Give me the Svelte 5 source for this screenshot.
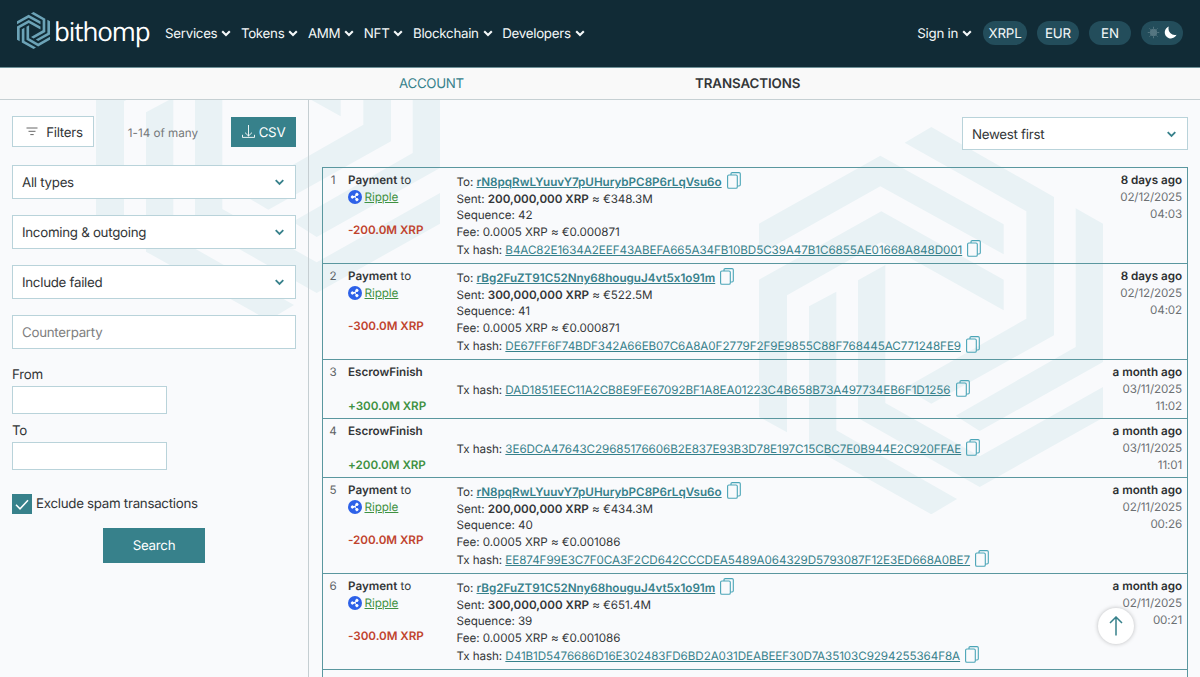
<script>
  const menu = ["Services", "Tokens", "AMM", "NFT", "Blockchain", "Developers"];
  const filters = ["All types", "Incoming & outgoing", "Include failed"];

  const first = "rN8pqRwLYuuvY7pUHurybPC8P6rLqVsu6o";
  const second = "rBg2FuZT91C52Nny68houguJ4vt5x1o91m";

  const transactions = [
    { type: "Payment", change: "-200.0M XRP", to: first, sent: "200,000,000 XRP", fiat: "€348.3M", sequence: 42, fee: "€0.000871", hash: "B4AC82E1634A2EEF43ABEFA665A34FB10BD5C39A47B1C6855AE01668A848D001", ago: "8 days ago", date: "02/12/2025", time: "04:03" },
    { type: "Payment", change: "-300.0M XRP", to: second, sent: "300,000,000 XRP", fiat: "€522.5M", sequence: 41, fee: "€0.000871", hash: "DE67FF6F74BDF342A66EB07C6A8A0F2779F2F9E9855C88F768445AC771248FE9", ago: "8 days ago", date: "02/12/2025", time: "04:02" },
    { type: "EscrowFinish", change: "+300.0M XRP", hash: "DAD1851EEC11A2CB8E9FE67092BF1A8EA01223C4B658B73A497734EB6F1D1256", ago: "a month ago", date: "03/11/2025", time: "11:02" },
    { type: "EscrowFinish", change: "+200.0M XRP", hash: "3E6DCA47643C29685176606B2E837E93B3D78E197C15CBC7E0B944E2C920FFAE", ago: "a month ago", date: "03/11/2025", time: "11:01" },
    { type: "Payment", change: "-200.0M XRP", to: first, sent: "200,000,000 XRP", fiat: "€434.3M", sequence: 40, fee: "€0.001086", hash: "EE874F99E3C7F0CA3F2CD642CCCDEA5489A064329D5793087F12E3ED668A0BE7", ago: "a month ago", date: "02/11/2025", time: "00:26" },
    { type: "Payment", change: "-300.0M XRP", to: second, sent: "300,000,000 XRP", fiat: "€651.4M", sequence: 39, fee: "€0.001086", hash: "D41B1D5476686D16E302483FD6BD2A031DEABEEF30D7A35103C9294255364F8A", ago: "a month ago", date: "02/11/2025", time: "00:21" }
  ];

  let spam = true;
</script>

{#snippet mark(name)}
  <svg class={name} viewBox="58 20 1032 1162" preserveAspectRatio="none">
    <path d="M58 310 422 106 792 312V402L422 198 58 402Z" />
    <path d="M58 478 425 273 792 478V570L425 365 142 525V936L58 890Z" />
    <path d="M208 558 290 514V930L652 1136 575 1182 208 976Z" />
    <path d="M355 480 437 434V848L720 1008 1090 800V892L720 1100 355 893Z" />
    <path d="M575 20 943 230V645L575 850 495 803 860 595V273L495 67Z" />
    <path d="M1008 264 1090 310V725L720 932 648 886 1008 680Z" />
  </svg>
{/snippet}

{#snippet chevron()}
  <svg class="chevron" viewBox="0 0 10 7"><path d="M1.2 1.2 5 5 8.8 1.2" /></svg>
{/snippet}

{#snippet copy()}
  <svg class="copy" viewBox="0 0 14 17">
    <path d="M4 3V1.8Q4 .6 5.2 .6H12Q13.3 .6 13.3 1.8V12.8Q13.3 14 12 14H10.5" />
    <rect x=".6" y="3" width="9.7" height="13.3" rx="1.3" />
  </svg>
{/snippet}

<div class="page">
  <header>
    <a class="logo" href="#home">
      {@render mark("logo-mark")}
      <span>bithomp</span>
    </a>
    <nav>
      {#each menu as item}
        <span class="menu-item">{item}{@render chevron()}</span>
      {/each}
    </nav>
    <div class="header-right">
      <span class="menu-item sign-in">Sign in{@render chevron()}</span>
      <span class="pill wide">XRPL</span>
      <span class="pill">EUR</span>
      <span class="pill">EN</span>
      <span class="pill theme">
        <svg class="sun" viewBox="0 0 14 14">
          <circle cx="7" cy="7" r="3.6" />
          <path d="M7 .8V3M7 11v2.2M.8 7H3M11 7h2.2M2.6 2.6 4 4M10 10l1.4 1.4M11.4 2.6 10 4M4 10l-1.4 1.4" />
        </svg>
        <svg class="moon" viewBox="0 0 14 14"><path d="M5.2 .6A6.6 6.6 0 1 0 13.5 9.4 6.9 6.9 0 0 1 5.2 .6Z" /></svg>
      </span>
    </div>
  </header>

  <div class="tabs">
    <a href="#account">ACCOUNT</a>
    <b>TRANSACTIONS</b>
  </div>

  <main>
    {@render mark("watermark left")}
    {@render mark("watermark right")}

    <aside>
      <div class="filters-top">
        <button class="filters">
          <svg viewBox="0 0 12 9"><path d="M.5 1h11M2.5 4.3h7M4.3 7.6h3.4" /></svg>
          Filters
        </button>
        <span class="count">1-14 of many</span>
        <button class="csv">
          <svg viewBox="0 0 13 13"><path d="M6.5 0V11M3 7.6 6.5 11 10 7.6M.5 9.8V12.4H12.5V9.8" /></svg>
          CSV
        </button>
      </div>
      {#each filters as filter}
        <div class="select">{filter}{@render chevron()}</div>
      {/each}
      <input class="counterparty" placeholder="Counterparty" />
      <label class="date">From<input /></label>
      <label class="date">To<input /></label>
      <button class="check" onclick={() => (spam = !spam)}>
        <span class="box">
          {#if spam}
            <svg viewBox="0 0 14 11"><path d="M1 5.8 5 9.8 13 1.2" /></svg>
          {/if}
        </span>
        Exclude spam transactions
      </button>
      <button class="search">Search</button>
    </aside>

    <section>
      <div class="select sort">Newest first{@render chevron()}</div>
      <div class="table">
        {#each transactions as tx, i}
          <div class="row" class:short={!tx.to}>
            <div class="index">{i + 1}</div>
            <div class="type">
              <div><b>{tx.type}</b>{tx.to ? " to" : ""}</div>
              {#if tx.to}
                <div class="name">
                  <svg viewBox="0 0 14 14">
                    <circle class="disc" cx="7" cy="7" r="7" />
                    <path d="M4.6 7H7L8.8 4.6M7 7 8.8 9.4" />
                    <circle cx="4.4" cy="7" r="1.2" /><circle cx="8.9" cy="4.4" r="1.2" /><circle cx="8.9" cy="9.6" r="1.2" />
                  </svg>
                  <a href="#ripple">Ripple</a>
                </div>
              {/if}
              <div class="change" class:plus={tx.change[0] == "+"}>{tx.change}</div>
            </div>
            <div class="details">
              {#if tx.to}
                <div class="address">To: <a href="#address"><b>{tx.to}</b></a>{@render copy()}</div>
                <div>Sent: <b>{tx.sent}</b> ≈ {tx.fiat}</div>
                <div>Sequence: {tx.sequence}</div>
                <div>Fee: 0.0005 XRP ≈ {tx.fee}</div>
              {/if}
              <div class="hash">Tx hash: <a href="#tx">{tx.hash}</a>{@render copy()}</div>
            </div>
            <div class="when">
              <b>{tx.ago}</b>
              <div>{tx.date}</div>
              <div>{tx.time}</div>
            </div>
          </div>
        {/each}
      </div>
    </section>
  </main>

  <button class="to-top" aria-label="Scroll to top">
    <svg viewBox="0 0 14 20"><path d="M7 19.5V1M1 7 7 1 13 7" /></svg>
  </button>
</div>

<style>
:global(body) {
    margin: 0;
    background: #f9fafc;
}

.page {
    position: relative;
    height: 677px;
    overflow: hidden;
    font-family: Inter, "Liberation Sans", sans-serif;
    font-size: 13.33px;
    letter-spacing: -0.29px;
    font-feature-settings: "calt" 0;
    text-rendering: geometricPrecision;
    color: #333638;
    background: #f9fafc;
}

button, input {
    font: inherit;
    letter-spacing: inherit;
    color: inherit;
    text-rendering: inherit;
    box-sizing: border-box;
    border-radius: 0;
    padding: 0;
}

b {
    font-weight: 600;
}

a {
    color: #37818b;
}

svg {
    flex: none;
    fill: none;
}

header {
    height: 68px;
    box-sizing: border-box;
    padding: 0 17px;
    border-bottom: 1px solid #6f9299;
    display: flex;
    align-items: center;
    background: #112b36;
    color: #f4f8f9;
}

header > * {
    position: relative;
    top: -1px;
}

.logo {
    display: flex;
    align-items: center;
    width: 148px;
    gap: 4px;
    color: #fff;
    text-decoration: none;
    font-family: "Open Sans", sans-serif;
    font-size: 26px;
    font-weight: 500;
    line-height: 38px;
    letter-spacing: -1.1px;
}

.logo-mark {
    width: 33px;
    height: 37px;
    margin-top: -4px;
    fill: #6ca3b7;
}

.logo span {
    margin-top: -4px;
}

nav {
    display: flex;
    gap: 9.5px;
}

.menu-item {
    display: flex;
    align-items: center;
    gap: 4px;
    padding-top: 2.5px;
}

.chevron {
    width: 10px;
    height: 7px;
    stroke: currentColor;
    stroke-width: 2.1;
}

.header-right {
    display: flex;
    align-items: center;
    gap: 10px;
    margin-left: auto;
}

.sign-in {
    margin-right: 1px;
}

.pill {
    display: flex;
    align-items: center;
    justify-content: center;
    width: 42px;
    height: 24px;
    box-sizing: border-box;
    padding-top: 2px;
    border-radius: 12px;
    background: #234d5b;
    letter-spacing: -0.15px;
}

.wide {
    width: 44px;
}

.theme {
    gap: 4px;
    padding: 0 1px 0 0;
}

.theme svg {
    width: 13px;
    height: 13px;
}

.sun {
    fill: #557681;
    stroke: #557681;
}

.moon {
    fill: #fff;
}

.tabs {
    display: flex;
    height: 32px;
    box-sizing: border-box;
    border-bottom: 1px solid #c6d0d3;
    background: #f9f9f9;
    line-height: 32.6px;
    padding-left: 399px;
    gap: 231px;
}

.tabs a {
    text-decoration: none;
}

.tabs b {
    letter-spacing: -0.08px;
}

main {
    position: relative;
    display: flex;
    height: 577px;
    overflow: hidden;
}

.watermark {
    position: absolute;
    width: 344px;
    height: 387.3px;
    fill: #e9f2f5;
}

.left {
    left: 96.3px;
    top: -167.5px;
}

.right {
    left: 759.3px;
    top: 26.7px;
}

aside {
    position: relative;
    width: 309px;
    box-sizing: border-box;
    border-right: 1px solid #c5ced2;
    padding: 16px 12px;
    display: flex;
    flex-direction: column;
}

.filters-top {
    display: flex;
    align-items: center;
    justify-content: space-between;
    height: 31px;
    margin-bottom: 18px;
}

.filters {
    width: 82px;
    height: 31px;
    display: flex;
    align-items: center;
    justify-content: center;
    gap: 8px;
    padding: 2px 0 0 3px;
    background: #fff;
    border: 1px solid #b9d3da;
}

.filters svg {
    width: 12px;
    height: 9px;
    margin-top: -3px;
    stroke: #666;
}

.count {
    padding: 2px 0 0 1px;
    font-size: 11.67px;
    letter-spacing: 0;
    color: #747779;
}

.csv {
    width: 65px;
    height: 30px;
    display: flex;
    align-items: center;
    justify-content: center;
    gap: 4px;
    padding-top: 2px;
    border: 0;
    background: #37818b;
    color: #fff;
}

.csv svg {
    width: 13px;
    height: 13px;
    margin-top: -2px;
    stroke: #fff;
    stroke-width: 0.9;
}

.select, .counterparty {
    display: flex;
    align-items: center;
    justify-content: space-between;
    height: 34px;
    box-sizing: border-box;
    border: 1px solid #b9d3da;
    background: #fff;
    padding: 1px 10px 0 9px;
    margin-bottom: 16px;
}

.select .chevron {
    width: 11px;
    stroke: #37818b;
    stroke-width: 1.8;
}

.counterparty::placeholder {
    color: #808080;
}

.date {
    display: flex;
    flex-direction: column;
    gap: 2px;
    line-height: 17px;
    height: 56px;
    box-sizing: border-box;
    padding-top: 1px;
}

.counterparty + .date {
    margin-top: 1px;
}

.date input {
    width: 155px;
    height: 28px;
    border: 1px solid #b9d3da;
    background: #fff;
}

.check {
    display: flex;
    align-items: center;
    gap: 4px;
    margin-top: 16px;
    border: 0;
    background: none;
}

.box {
    display: flex;
    align-items: center;
    justify-content: center;
    width: 20px;
    height: 20px;
    background: #37818b;
}

.box svg {
    width: 14px;
    height: 11px;
    stroke: #fff;
    stroke-width: 1.5;
}

.search {
    width: 102px;
    height: 35px;
    margin: 14px 0 0 91px;
    padding-top: 1px;
    border: 0;
    background: #37818b;
    color: #fff;
}

section {
    position: relative;
    flex: 1;
    padding: 17px 12px 0 13px;
}

.sort {
    width: 226px;
    height: 33px;
    padding-top: 2px;
    margin: 0 0 17px auto;
}

.table {
    font-size: 11.67px;
    line-height: 16.67px;
    letter-spacing: -0.06px;
    height: 560px;
    border: 1px solid #5a979f;
}

.table b {
    letter-spacing: -0.02px;
}

.row {
    display: flex;
    height: 96px;
    box-sizing: border-box;
    border-bottom: 1px solid #5a979f;
    padding: 4.4px 5px 0 0;
}

.short {
    height: 59px;
}

.index {
    width: 20px;
    text-align: center;
    color: #5d6265;
}

.type {
    width: 104px;
    padding-left: 5px;
}

.name {
    display: flex;
    align-items: center;
    gap: 2.5px;
}

.name a {
    color: #3f9142;
}

.name svg {
    width: 14px;
    height: 14px;
    fill: #fff;
    stroke: #fff;
    stroke-width: 0.9;
}

.name .disc {
    fill: #2d61e8;
    stroke: none;
}

.change {
    margin-top: 16.67px;
    font-weight: 600;
    letter-spacing: -0.03px;
    color: #c0432e;
}

.plus {
    color: #3f9142;
}

.details {
    padding-left: 4.5px;
}

.address {
    margin-top: 1.7px;
}

.hash {
    margin-top: 1.6px;
    letter-spacing: -0.08px;
}

.short .hash {
    margin-top: 17.2px;
}

.copy {
    width: 14px;
    height: 17px;
    margin: -3px 0 -3px 5px;
    stroke: #4ba5b7;
    stroke-width: 1.1;
}

.when {
    margin-left: auto;
    text-align: right;
    letter-spacing: -0.16px;
    color: #6c7073;
}

.when b {
    color: #2d3032;
}

.to-top {
    position: absolute;
    left: 1098px;
    top: 608px;
    width: 36px;
    height: 36px;
    display: flex;
    align-items: center;
    justify-content: center;
    border: 0;
    border-radius: 50%;
    background: #fff;
    box-shadow: 0 0 4px rgba(0, 0, 0, 0.25);
}

.to-top svg {
    width: 14px;
    height: 20px;
    stroke: #37818b;
    stroke-width: 1.5;
}
</style>
